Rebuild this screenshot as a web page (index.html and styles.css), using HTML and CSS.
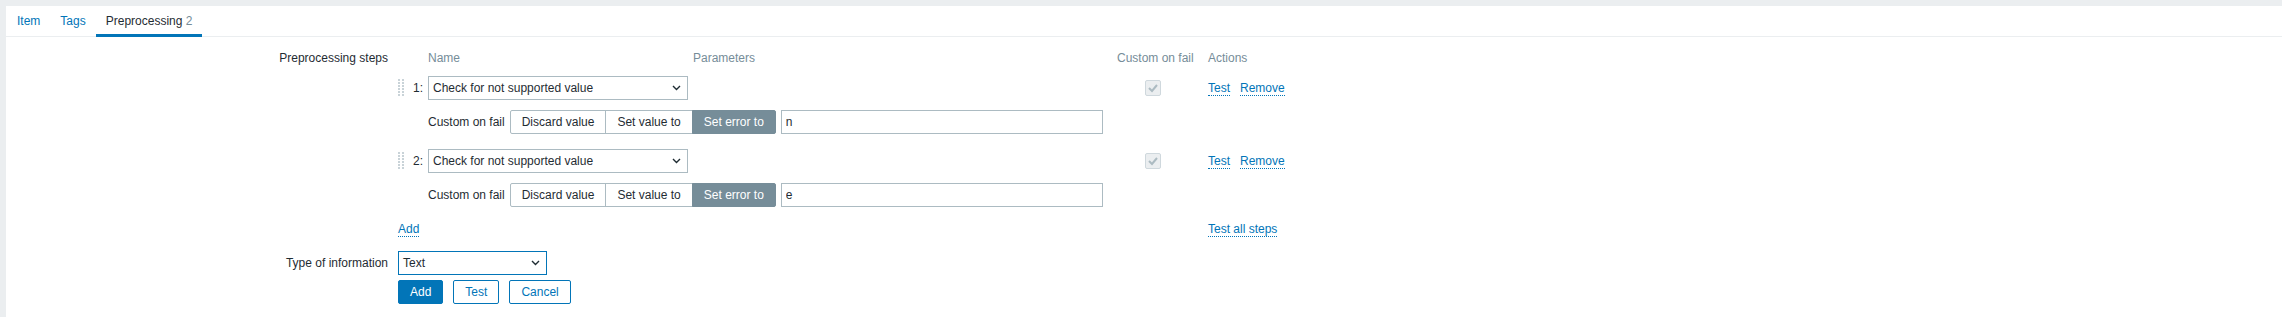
FILE: index.html
```html
<!DOCTYPE html>
<html>
<head>
<meta charset="utf-8" />
<title>Item - Preprocessing</title>
<link rel="stylesheet" href="styles.css">
</head>
<body>

<div class="page">
	<ul class="tabs">
		<li><a href="#">Item</a></li>
		<li><a href="#">Tags</a></li>
		<li class="active"><span>Preprocessing</span> <span class="count">2</span></li>
	</ul>

	<form class="form">
		<div class="formRow">
			<label class="formLabel">Preprocessing steps</label>
			<div class="formField">
				<div class="steps">
					<div class="stepsHead">
						<span class="colNum"></span>
						<span class="colName">Name</span>
						<span class="colParams">Parameters</span>
						<span class="colFail">Custom on fail</span>
						<span class="colActions">Actions</span>
					</div>

					<div class="step">
						<div class="stepMain">
							<div class="colNum">
								<svg class="handle" width="6" height="18" viewBox="0 0 6 18">
									<g fill="#c9d3d8">
										<rect x="0" y="0" width="2" height="2"/><rect x="4" y="0" width="2" height="2"/>
										<rect x="0" y="3" width="2" height="2"/><rect x="4" y="3" width="2" height="2"/>
										<rect x="0" y="6" width="2" height="2"/><rect x="4" y="6" width="2" height="2"/>
										<rect x="0" y="9" width="2" height="2"/><rect x="4" y="9" width="2" height="2"/>
										<rect x="0" y="12" width="2" height="2"/><rect x="4" y="12" width="2" height="2"/>
										<rect x="0" y="15" width="2" height="2"/><rect x="4" y="15" width="2" height="2"/>
									</g>
								</svg>
								<span class="num">1:</span>
							</div>
							<div class="colName">
								<div class="select wide">
									<span>Check for not supported value</span>
									<svg width="9" height="6" viewBox="0 0 9 6"><polyline points="1,1 4.5,4.5 8,1" fill="none" stroke="#1f2c33" stroke-width="1.4"/></svg>
								</div>
							</div>
							<div class="colParams"></div>
							<div class="colFail">
								<span class="checkbox">
									<svg width="14" height="14" viewBox="0 0 14 14"><polyline points="3,7 6,10 11,4" fill="none" stroke="#acbbc2" stroke-width="2"/></svg>
								</span>
							</div>
							<div class="colActions">
								<a href="#" class="link">Test</a>
								<a href="#" class="link">Remove</a>
							</div>
						</div>
						<div class="stepFail">
							<span>Custom on fail</span>
							<div class="radioGroup">
								<span class="radio">Discard value</span>
								<span class="radio">Set value to</span>
								<span class="radio checked">Set error to</span>
							</div>
							<input class="textbox" type="text" value="n" />
						</div>
					</div>

					<div class="step">
						<div class="stepMain">
							<div class="colNum">
								<svg class="handle" width="6" height="18" viewBox="0 0 6 18">
									<g fill="#c9d3d8">
										<rect x="0" y="0" width="2" height="2"/><rect x="4" y="0" width="2" height="2"/>
										<rect x="0" y="3" width="2" height="2"/><rect x="4" y="3" width="2" height="2"/>
										<rect x="0" y="6" width="2" height="2"/><rect x="4" y="6" width="2" height="2"/>
										<rect x="0" y="9" width="2" height="2"/><rect x="4" y="9" width="2" height="2"/>
										<rect x="0" y="12" width="2" height="2"/><rect x="4" y="12" width="2" height="2"/>
										<rect x="0" y="15" width="2" height="2"/><rect x="4" y="15" width="2" height="2"/>
									</g>
								</svg>
								<span class="num">2:</span>
							</div>
							<div class="colName">
								<div class="select wide">
									<span>Check for not supported value</span>
									<svg width="9" height="6" viewBox="0 0 9 6"><polyline points="1,1 4.5,4.5 8,1" fill="none" stroke="#1f2c33" stroke-width="1.4"/></svg>
								</div>
							</div>
							<div class="colParams"></div>
							<div class="colFail">
								<span class="checkbox">
									<svg width="14" height="14" viewBox="0 0 14 14"><polyline points="3,7 6,10 11,4" fill="none" stroke="#acbbc2" stroke-width="2"/></svg>
								</span>
							</div>
							<div class="colActions">
								<a href="#" class="link">Test</a>
								<a href="#" class="link">Remove</a>
							</div>
						</div>
						<div class="stepFail">
							<span>Custom on fail</span>
							<div class="radioGroup">
								<span class="radio">Discard value</span>
								<span class="radio">Set value to</span>
								<span class="radio checked">Set error to</span>
							</div>
							<input class="textbox" type="text" value="e" />
						</div>
					</div>

					<div class="stepsFoot">
						<span class="footAdd"><a href="#" class="link">Add</a></span>
						<a href="#" class="link">Test all steps</a>
					</div>
				</div>
			</div>
		</div>

		<div class="formRow typeRow">
			<label class="formLabel">Type of information</label>
			<div class="formField">
				<div class="select narrow focused">
					<span>Text</span>
					<svg width="9" height="6" viewBox="0 0 9 6"><polyline points="1,1 4.5,4.5 8,1" fill="none" stroke="#1f2c33" stroke-width="1.4"/></svg>
				</div>
			</div>
		</div>

		<div class="formRow buttonRow">
			<span class="formLabel"></span>
			<div class="formField buttons">
				<button type="button" class="btn primary">Add</button>
				<button type="button" class="btn alt">Test</button>
				<button type="button" class="btn alt">Cancel</button>
			</div>
		</div>
	</form>
</div>

</body>
</html>
```

FILE: styles.css
```css
html, body {
	margin: 0;
	padding: 0;
	height: 100%;
}

body {
	background-color: #ebeef0;
	font-family: "Liberation Sans", Arial, sans-serif;
	font-size: 12px;
	color: #1f2c33;
}

.page {
	margin: 6px 0 0 6px;
	background-color: #ffffff;
	min-height: calc(100% - 6px);
	box-sizing: border-box;
}

/* tabs */

.tabs {
	display: flex;
	list-style: none;
	margin: 0;
	padding: 0 0 0 1px;
	border-bottom: 1px solid #ebeef0;
}

.tabs li {
	padding: 8px 10px 5px;
	line-height: 15px;
	border-bottom: 3px solid transparent;
	margin-bottom: -1px;
}

.tabs li a {
	color: #0275b8;
	text-decoration: none;
}

.tabs li.active {
	border-bottom-color: #0275b8;
}

.tabs .count {
	color: #768d99;
}

/* form */

.form {
	padding-top: 9px;
	display: flex;
	flex-direction: column;
}

.formRow {
	display: flex;
}

.formLabel {
	width: 382px;
	padding-right: 10px;
	text-align: right;
	line-height: 24px;
	flex-shrink: 0;
}

.formField {
	flex: 1;
}

.typeRow {
	margin-top: 10px;
}

.buttonRow {
	margin-top: 5px;
}

/* steps table */

.stepsHead, .stepMain {
	display: flex;
	align-items: center;
	height: 24px;
}

.stepsHead {
	color: #768d99;
}

.colNum {
	width: 30px;
	display: flex;
	align-items: center;
	flex-shrink: 0;
}

.colName {
	width: 265px;
	flex-shrink: 0;
}

.colParams {
	width: 424px;
	flex-shrink: 0;
}

.colFail {
	width: 91px;
	flex-shrink: 0;
}

.colActions {
	display: flex;
	gap: 10px;
}

.handle {
	display: block;
}

.num {
	margin-left: 9px;
}

.step {
	margin-top: 15px;
}

.stepsHead + .step {
	margin-top: 6px;
}

.stepFail {
	display: flex;
	align-items: center;
	margin: 10px 0 0 30px;
	gap: 5px;
}

.stepsFoot {
	display: flex;
	align-items: center;
	height: 24px;
	margin-top: 10px;
}

.footAdd {
	width: 810px;
}

/* controls */

.link {
	color: #0275b8;
	text-decoration: none;
	border-bottom: 1px dotted #0275b8;
	line-height: 14px;
}

.select {
	box-sizing: border-box;
	height: 24px;
	border: 1px solid #acbbc2;
	display: flex;
	align-items: center;
	justify-content: space-between;
	padding: 0 6px 0 4px;
	background-color: #ffffff;
}

.select svg {
	display: block;
}

.select.wide {
	width: 260px;
}

.select.narrow {
	width: 149px;
}

.select.focused {
	border-color: #0275b8;
}

.checkbox {
	display: flex;
	align-items: center;
	justify-content: center;
	box-sizing: border-box;
	width: 16px;
	height: 16px;
	margin-left: 28px;
	background-color: #ebeef0;
	border: 1px solid #cfd8dd;
	border-radius: 2px;
}

.radioGroup {
	display: flex;
}

.radio {
	box-sizing: border-box;
	height: 24px;
	line-height: 22px;
	padding: 0 11px;
	border: 1px solid #acbbc2;
	margin-left: -1px;
	background-color: #ffffff;
}

.radio:first-child {
	margin-left: 0;
	border-radius: 2px 0 0 2px;
}

.radio:last-child {
	border-radius: 0 2px 2px 0;
}

.radio.checked {
	background-color: #768d99;
	border-color: #768d99;
	color: #ffffff;
}

.textbox {
	box-sizing: border-box;
	width: 322px;
	height: 24px;
	border: 1px solid #acbbc2;
	padding: 0 4px;
	font-family: inherit;
	font-size: 12px;
	color: #1f2c33;
	margin: 0;
}

.buttons {
	display: flex;
	gap: 10px;
}

.btn {
	box-sizing: border-box;
	height: 24px;
	padding: 0 11px;
	border: 1px solid #0275b8;
	border-radius: 2px;
	font-family: inherit;
	font-size: 12px;
	cursor: pointer;
	margin: 0;
}

.btn.primary {
	background-color: #0275b8;
	color: #ffffff;
}

.btn.alt {
	background-color: #ffffff;
	color: #0275b8;
}
```
